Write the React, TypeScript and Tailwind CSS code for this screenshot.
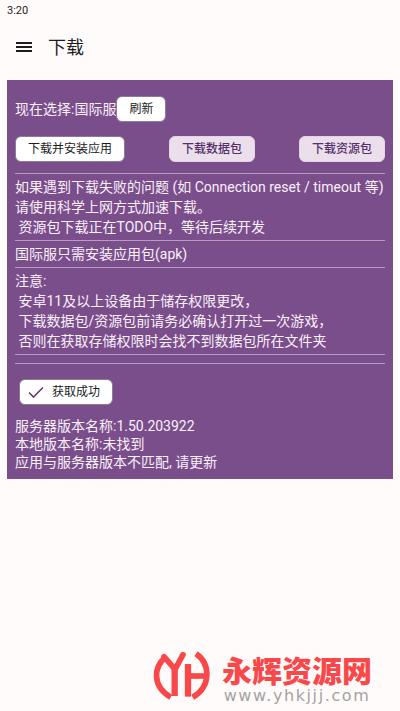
import type { ReactNode } from 'react';

function OutlineButton({ children }: { children: ReactNode }) {
  return (
    <button
      type="button"
      className="flex h-[26px] items-center rounded-md border border-[#8d7a95] bg-white px-3 text-[12px] text-[#1d1b1e]"
    >
      {children}
    </button>
  );
}

function TonalButton({ children }: { children: ReactNode }) {
  return (
    <button
      type="button"
      className="flex h-[26px] items-center rounded-md border border-[#e3d3e6] bg-[#ecdfec] px-3 text-[12px] font-medium text-[#55306a]"
    >
      {children}
    </button>
  );
}

function Divider() {
  return <hr className="border-t border-[#b99cc4]" />;
}

function Brand() {
  return (
    <footer className="mt-auto flex items-end justify-end gap-2 pr-7 pb-[7px]">
      <svg viewBox="0 0 192 168" className="h-14 w-16" fill="none" stroke="#f9484a" strokeWidth="17" strokeLinejoin="round" aria-hidden="true">
        <path d="M47 27C10 58 6 114 62 148" />
        <path d="M42 26l33 38L99 20" strokeLinecap="round" />
        <path d="M74 56v88" strokeWidth="19" />
        <path d="M114 48v98" strokeWidth="19" />
        <path d="M114 84h56" />
        <path d="M138 17C182 48 184 116 128 148" />
      </svg>
      <div className="flex flex-col items-center">
        <p className="text-[30px] leading-8 font-black text-[#f9484a]">永辉资源网</p>
        <p className="font-['DejaVu_Sans',sans-serif] text-[16px] leading-4 tracking-widest text-[#a5a2a2]">
          www.yhkjjj.com
        </p>
      </div>
    </footer>
  );
}

export default function App() {
  return (
    <div className="flex min-h-screen flex-col bg-[#fffbfb] font-[Roboto,'Noto_Sans_CJK_SC',sans-serif] text-[#1d1b1e]">
      <div className="px-[7px] pt-1 text-[11px] leading-[14px]">3:20</div>

      <header className="flex items-center gap-4 px-4 pt-[18px] pb-5">
        <button type="button" aria-label="菜单">
          <svg viewBox="0 0 16 12" className="h-3 w-4" fill="currentColor" aria-hidden="true">
            <path d="M0 0h16v2H0zM0 4h16v2H0zM0 8h16v2H0z" />
          </svg>
        </button>
        <h1 className="text-[18px] leading-6">下载</h1>
      </header>

      <main className="mx-[7px] bg-[#7a4e8a] px-2 pt-4 pb-2 text-[14px] leading-5 text-[#fbf0fc]">
        <div className="flex items-center">
          <span>现在选择:国际服</span>
          <OutlineButton>刷新</OutlineButton>
        </div>

        <div className="mt-[14px] mb-[11px] flex justify-between">
          <OutlineButton>下载并安装应用</OutlineButton>
          <TonalButton>下载数据包</TonalButton>
          <TonalButton>下载资源包</TonalButton>
        </div>

        <Divider />
        <p className="py-[3px] whitespace-pre-wrap">
          {'如果遇到下载失败的问题 (如 Connection reset / timeout 等)\n请使用科学上网方式加速下载。\n 资源包下载正在TODO中，等待后续开发'}
        </p>
        <Divider />
        <p className="py-[3px]">国际服只需安装应用包(apk)</p>
        <Divider />
        <p className="py-[3px] whitespace-pre-wrap">
          {'注意:\n 安卓11及以上设备由于储存权限更改，\n 下载数据包/资源包前请务必确认打开过一次游戏，\n 否则在获取存储权限时会找不到数据包所在文件夹'}
        </p>
        <Divider />
        <div className="h-2" />
        <Divider />

        <div className="flex px-1 pt-[15px] pb-3">
          <OutlineButton>
            <svg viewBox="0 0 16 12" className="mr-2 -ml-1 h-3 w-4" fill="none" stroke="#65377a" strokeWidth="1.6" aria-hidden="true">
              <path d="M1 6.5l4.500 4.500L15 1.500" />
            </svg>
            获取成功
          </OutlineButton>
        </div>

        <div className="leading-[18px]">
          <p>服务器版本名称:1.50.203922</p>
          <p>本地版本名称:未找到</p>
          <p>应用与服务器版本不匹配, 请更新</p>
        </div>
      </main>

      <Brand />
    </div>
  );
}
